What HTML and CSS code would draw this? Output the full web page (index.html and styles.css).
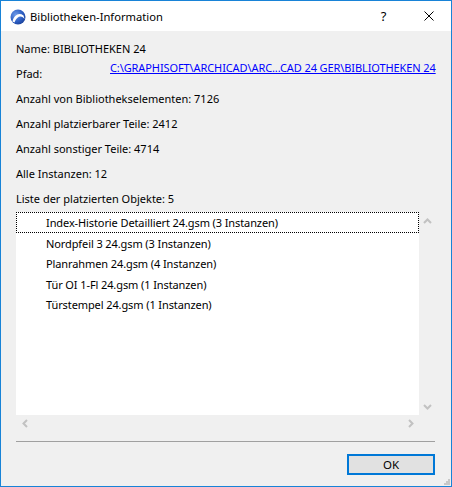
FILE: index.html
```html
<!DOCTYPE html>
<html lang="de">
<head>
<meta charset="utf-8">
<title>Bibliotheken-Information</title>
<link rel="stylesheet" href="styles.css">
</head>
<body>
<div class="window">
  <div class="titlebar">
    <svg class="app-icon" width="16" height="16" viewBox="0 0 16 16">
      <defs>
        <radialGradient id="g" cx="0.35" cy="0.35" r="0.75">
          <stop offset="0" stop-color="#6f9be8"/>
          <stop offset="0.6" stop-color="#2d5fc4"/>
          <stop offset="1" stop-color="#1a3f95"/>
        </radialGradient>
      </defs>
      <circle cx="8" cy="8" r="7.5" fill="url(#g)"/>
      <path d="M2.5 12.5 C4 6 9 3 13.5 6.5 L14.5 10 C12 6 7 6.5 4.5 13.5 Z" fill="#ffffff"/>
    </svg>
    <span class="title">Bibliotheken-Information</span>
    <div class="tb-btn help">?</div>
    <div class="tb-btn close">
      <svg width="10" height="10" viewBox="0 0 10 10"><path d="M0.5 0.5 L9.5 9.5 M9.5 0.5 L0.5 9.5" stroke="#000" stroke-width="1" fill="none"/></svg>
    </div>
  </div>
  <div class="content">
    <div class="row">Name: BIBLIOTHEKEN 24</div>
    <div class="row path-row">
      <span class="label">Pfad:</span>
      <a class="link" href="#">C:\GRAPHISOFT\ARCHICAD\ARC...CAD 24 GER\BIBLIOTHEKEN 24</a>
    </div>
    <div class="row">Anzahl von Bibliothekselementen: 7126</div>
    <div class="row">Anzahl platzierbarer Teile: 2412</div>
    <div class="row">Anzahl sonstiger Teile: 4714</div>
    <div class="row">Alle Instanzen: 12</div>
    <div class="row">Liste der platzierten Objekte: 5</div>
    <div class="listbox">
      <ul class="items">
        <li class="item focused">Index-Historie Detailliert 24.gsm (3 Instanzen)</li>
        <li class="item">Nordpfeil 3 24.gsm (3 Instanzen)</li>
        <li class="item">Planrahmen 24.gsm (4 Instanzen)</li>
        <li class="item">Tür OI 1-Fl 24.gsm (1 Instanzen)</li>
        <li class="item">Türstempel 24.gsm (1 Instanzen)</li>
      </ul>
      <div class="vscroll">
        <div class="arrow"><svg width="9" height="6" viewBox="0 0 9 6"><path d="M1 5 L4.5 1.5 L8 5" stroke="#c2c2c2" stroke-width="2" fill="none"/></svg></div>
        <div class="arrow"><svg width="9" height="6" viewBox="0 0 9 6"><path d="M1 1 L4.5 4.5 L8 1" stroke="#c2c2c2" stroke-width="2" fill="none"/></svg></div>
      </div>
      <div class="hscroll">
        <div class="arrow"><svg width="6" height="9" viewBox="0 0 6 9"><path d="M5 1 L1.5 4.5 L5 8" stroke="#c2c2c2" stroke-width="2" fill="none"/></svg></div>
        <div class="arrow"><svg width="6" height="9" viewBox="0 0 6 9"><path d="M1 1 L4.5 4.5 L1 8" stroke="#c2c2c2" stroke-width="2" fill="none"/></svg></div>
      </div>
      <div class="corner"></div>
    </div>
    <div class="separator"></div>
    <div class="footer">
      <button class="ok">OK</button>
    </div>
  </div>
  <svg class="grip" width="7" height="7" viewBox="0 0 7 7">
    <rect x="5" y="1" width="2" height="2" fill="#c8c8c8"/>
    <rect x="3" y="3" width="2" height="2" fill="#c8c8c8"/>
    <rect x="5" y="3" width="2" height="2" fill="#c8c8c8"/>
    <rect x="1" y="5" width="2" height="2" fill="#c8c8c8"/>
    <rect x="3" y="5" width="2" height="2" fill="#c8c8c8"/>
    <rect x="5" y="5" width="2" height="2" fill="#c8c8c8"/>
  </svg>
</div>
</body>
</html>
```
FILE: styles.css
```css
* { box-sizing: border-box; }
html, body { margin: 0; padding: 0; }
body {
  width: 452px;
  height: 487px;
  font-family: "Noto Sans", "Open Sans", sans-serif;
  font-size: 11px;
  color: #000;
  background: #f0f0f0;
}
.window {
  position: relative;
  width: 452px;
  height: 487px;
  border: 1px solid #1883d7;
  display: flex;
  flex-direction: column;
  background: #f0f0f0;
}
.titlebar {
  height: 30px;
  background: #fff;
  display: flex;
  align-items: center;
  flex-shrink: 0;
}
.app-icon { margin-left: 9px; margin-right: 4px; margin-top: 1px; flex-shrink: 0; }
.title { flex: 1; font-size: 11.2px; }
.tb-btn {
  width: 45px;
  height: 30px;
  display: flex;
  align-items: center;
  justify-content: center;
  flex-shrink: 0;
}
.help { font-size: 13px; }
.close svg { display: block; }
.content {
  flex: 1;
  display: flex;
  flex-direction: column;
  padding: 5px 15px 0 15px;
}
.row {
  height: 25px;
  line-height: 25px;
  white-space: nowrap;
  flex-shrink: 0;
}
.path-row { display: flex; }
.path-row .label { width: 94px; flex-shrink: 0; }
.link {
  color: #0000ff;
  text-decoration: underline;
  line-height: 14px;
  align-self: flex-start;
  white-space: nowrap;
  letter-spacing: -0.1px;
}
.listbox {
  margin-top: 1px;
  width: 420px;
  height: 220px;
  flex-shrink: 0;
  display: grid;
  grid-template-columns: 403px 17px;
  grid-template-rows: 203px 17px;
}
.items {
  list-style: none;
  margin: 0;
  padding: 0;
  background: #fff;
}
.item {
  height: 20.5px;
  line-height: 19px;
  padding-left: 29px;
  white-space: nowrap;
  border: 1px solid transparent;
  letter-spacing: -0.1px;
}
.item.focused { border: 1px dotted #000; }
.vscroll {
  display: flex;
  flex-direction: column;
  justify-content: space-between;
}
.hscroll {
  display: flex;
  justify-content: space-between;
}
.arrow {
  width: 17px;
  height: 17px;
  display: flex;
  align-items: center;
  justify-content: center;
}
.arrow svg { display: block; }
.separator {
  margin-top: 9px;
  height: 1px;
  width: 419px;
  background: #a0a0a0;
  flex-shrink: 0;
}
.footer {
  display: flex;
  justify-content: flex-end;
  padding-top: 12px;
  padding-right: 1px;
}
.ok {
  width: 88px;
  height: 21px;
  border: 2px solid #0078d7;
  background: #e1e1e1;
  font-family: inherit;
  font-size: 11.5px;
  color: #000;
  padding: 0;
  margin: 0;
}
.grip {
  position: absolute;
  right: 1px;
  bottom: 1px;
}
```
